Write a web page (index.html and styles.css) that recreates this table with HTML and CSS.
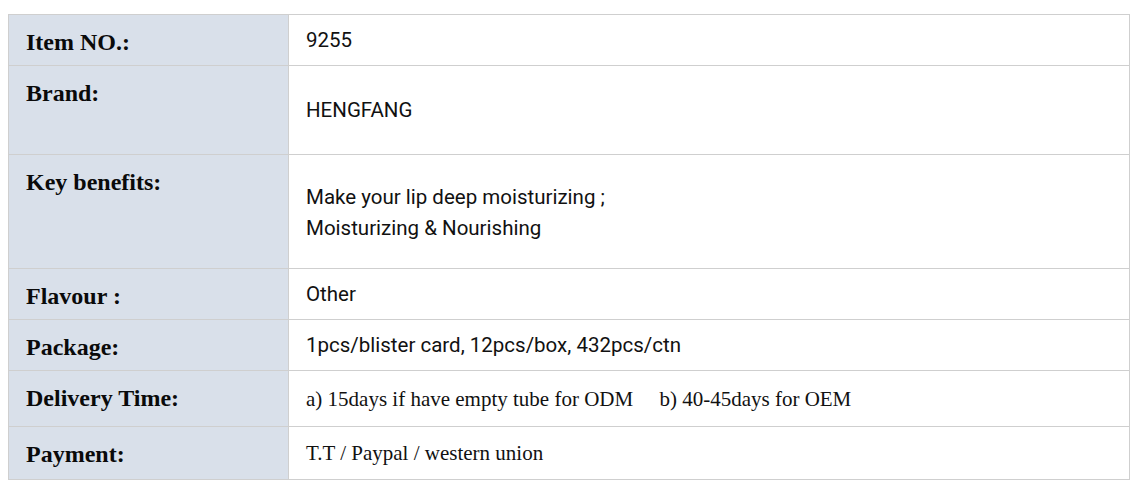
FILE: index.html
```html
<!DOCTYPE html>
<html>
<head>
<meta charset="utf-8">
<link rel="stylesheet" href="styles.css">
</head>
<body>
<table class="spec">
  <tr class="r1">
    <th>Item NO.:</th>
    <td>9255</td>
  </tr>
  <tr class="r2">
    <th>Brand:</th>
    <td>HENGFANG</td>
  </tr>
  <tr class="r3">
    <th>Key benefits:</th>
    <td><div class="lines">Make your lip deep moisturizing ;<br>Moisturizing &amp; Nourishing</div></td>
  </tr>
  <tr class="r1">
    <th>Flavour :</th>
    <td>Other</td>
  </tr>
  <tr class="r1">
    <th>Package:</th>
    <td>1pcs/blister card, 12pcs/box, 432pcs/ctn</td>
  </tr>
  <tr class="r6">
    <th>Delivery Time:</th>
    <td class="serif">a) 15days if have empty tube for ODM&nbsp;&nbsp;&nbsp;&nbsp; b) 40-45days for OEM</td>
  </tr>
  <tr class="r7">
    <th>Payment:</th>
    <td class="serif">T.T / Paypal / western union</td>
  </tr>
</table>
</body>
</html>
```
FILE: styles.css
```css
html, body {
  margin: 0;
  padding: 0;
  background: #fff;
}
body {
  padding: 14px 8px 0 8px;
}
.spec {
  width: 1122px;
  border-collapse: collapse;
  border: 1px solid #c9c9c9;
  table-layout: fixed;
}
.spec th, .spec td {
  border: 1px solid #cfcfcf;
  padding: 0 17px;
  box-sizing: border-box;
}
.spec th {
  width: 280px;
  background: #d9e0ea;
  text-align: left;
  vertical-align: top;
  font-family: "Liberation Serif", "Times New Roman", serif;
  font-weight: bold;
  font-size: 24px;
  line-height: 28px;
  padding-top: 13px;
  color: #0a0a0a;
}
.spec td {
  vertical-align: middle;
  font-family: Roboto, "Liberation Sans", Arial, sans-serif;
  font-size: 20.5px;
  line-height: 24px;
  color: #111;
}
.spec td.serif {
  font-family: "Liberation Serif", "Times New Roman", serif;
  font-size: 21px;
}
.lines {
  line-height: 31px;
  padding-top: 2px;
}
.r1 { height: 51px; }
.r2 { height: 89px; }
.r3 { height: 114px; }
.r6 { height: 56px; }
.r7 { height: 53px; }
```
